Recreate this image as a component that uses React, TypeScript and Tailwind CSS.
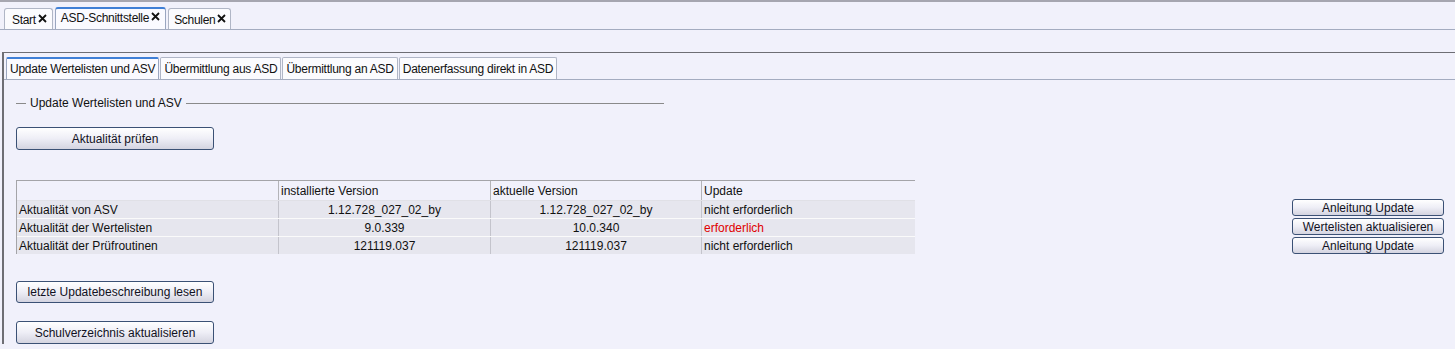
import React from "react";

const font = { fontFamily: '"Liberation Sans", Arial, sans-serif' };

function Btn({ label, className = "" }: { label: string; className?: string }) {
  return (
    <div
      className={
        "flex items-center justify-center rounded-[3px] border border-[#3b5175] bg-gradient-to-b from-[#ffffff] via-[#eeeef6] to-[#d4d4e0] text-[12px] text-[#111122] " +
        className
      }
    >
      {label}
    </div>
  );
}

function Close() {
  return (
    <svg width="9" height="9" viewBox="0 0 9 9" className="ml-[2px] mt-[-3px]">
      <path d="M1 1 L8 8 M8 1 L1 8" stroke="#111" strokeWidth="1.8" />
    </svg>
  );
}

function OuterTab({ label, selected, px }: { label: string; selected?: boolean; px: string }) {
  return (
    <div
      className={
        "flex items-center rounded-t-[3px] border border-b-0 text-[12px] tracking-[-0.3px] text-[#111] " +
        px +
        " " +
        (selected
          ? "h-[22px] border-[#9aa6c0] border-t-2 border-t-[#3f7fd6] bg-[#fafaff] pb-[3px]"
          : "mt-[1px] h-[21px] border-[#b0b6c6] bg-[#fbfbfe] pt-[2px]")
      }
    >
      {label}
      <Close />
    </div>
  );
}

function InnerTab({ label, selected }: { label: string; selected?: boolean }) {
  return (
    <div
      className={
        "flex h-[22px] items-center rounded-t-[2px] border border-b-0 px-[3px] text-[12px] tracking-[-0.25px] text-[#111] " +
        (selected
          ? "border-[#9aa6c0] border-t-2 border-t-[#3f7fd6] bg-[#fafaff]"
          : "border-[#b0b6c6] bg-[#fbfbfe]")
      }
    >
      {label}
    </div>
  );
}

const rows = [
  ["Aktualität von ASV", "1.12.728_027_02_by", "1.12.728_027_02_by", "nicht erforderlich", false],
  ["Aktualität der Wertelisten", "9.0.339", "10.0.340", "erforderlich", true],
  ["Aktualität der Prüfroutinen", "121119.037", "121119.037", "nicht erforderlich", false],
] as const;

export default function App() {
  return (
    <div style={font} className="h-[349px] w-[1455px] overflow-hidden bg-[#f1f1fb] leading-none text-[#111]">
      <div className="h-[2px] bg-[#a6a6b0]" />
      {/* outer tabs */}
      <div className="flex h-[28px] items-end gap-[2px] border-b border-[#a4acc0] pl-[4px]">
        <OuterTab label="Start" px="pl-[7px] pr-[5px]" />
        <OuterTab label="ASD-Schnittstelle" selected px="px-[5px]" />
        <OuterTab label="Schulen" px="pl-[5px] pr-[4px]" />
      </div>
      <div className="h-[22px]" />
      {/* inner pane */}
      <div className="ml-[2px] border-l-2 border-t border-[#6e6e74] pt-[4px]">
        <div className="flex h-[23px] items-end gap-[1px] border-b border-[#a4acc0] pl-[2px]">
          <InnerTab label="Update Wertelisten und ASV" selected />
          <InnerTab label="Übermittlung aus ASD" />
          <InnerTab label="Übermittlung an ASD" />
          <InnerTab label="Datenerfassung direkt in ASD" />
        </div>
        <div className="pl-[12px] pt-[16px]">
          {/* group title */}
          <div className="flex h-[14px] w-[648px] items-center text-[12px]">
            <div className="h-px w-[10px] bg-[#8a8a8a]" />
            <span className="px-[4px]">Update Wertelisten und ASV</span>
            <div className="h-px flex-1 bg-[#8a8a8a]" />
          </div>
          <Btn label="Aktualität prüfen" className="mt-[17px] h-[23px] w-[198px]" />
          <div className="mt-[30px] flex">
            {/* table */}
            <div className="h-[74px] w-[899px] overflow-hidden border-l border-t border-[#a4a4a8] text-[12px]">
              <div className="grid h-[20px] grid-cols-[261px_212px_211px_215px] border-b border-[#e0e0e6]">
                <div />
                <div className="flex items-center border-l border-[#b4b4b8] pl-[2px]">installierte Version</div>
                <div className="flex items-center border-l border-[#b4b4b8] pl-[2px]">aktuelle Version</div>
                <div className="flex items-center border-l border-r border-[#b4b4b8] pl-[2px]">Update</div>
              </div>
              {rows.map((r, i) => (
                <div
                  key={i}
                  className="grid h-[18px] grid-cols-[261px_212px_211px_215px] border-b border-[#fafafa] bg-[#e6e6ee]"
                >
                  <div className="flex items-center pl-[2px]">{r[0]}</div>
                  <div className="flex items-center justify-center border-l border-[#c4c4cc]">{r[1]}</div>
                  <div className="flex items-center justify-center border-l border-[#c4c4cc]">{r[2]}</div>
                  <div
                    className={
                      "flex items-center border-l border-[#c4c4cc] pl-[2px] " +
                      (r[4] ? "text-[#e00000]" : "")
                    }
                  >
                    {r[3]}
                  </div>
                </div>
              ))}
            </div>
            <div className="ml-auto mr-[11px] mt-[19px] flex flex-col gap-[2px]">
              <Btn label="Anleitung Update" className="h-[17px] w-[152px]" />
              <Btn label="Wertelisten aktualisieren" className="h-[17px] w-[152px]" />
              <Btn label="Anleitung Update" className="h-[17px] w-[152px]" />
            </div>
          </div>
          <Btn label="letzte Updatebeschreibung lesen" className="mt-[27px] h-[22px] w-[198px]" />
          <Btn label="Schulverzeichnis aktualisieren" className="mt-[18px] h-[23px] w-[198px]" />
        </div>
      </div>
    </div>
  );
}
